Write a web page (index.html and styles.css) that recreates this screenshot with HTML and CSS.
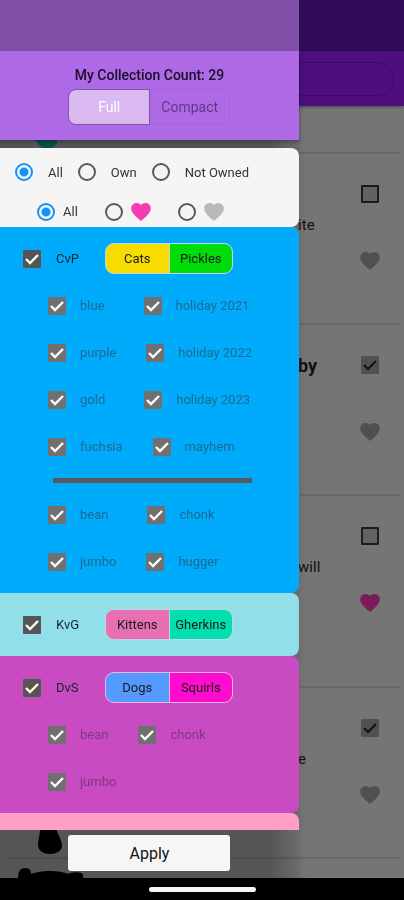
FILE: index.html
```html
<!DOCTYPE html>
<html lang="en">

<head>
    <meta charset="UTF-8">
    <meta name="viewport" content="width=device-width, initial-scale=1.0">
    <title>My Collection</title>
    <link rel="stylesheet" href="styles.css">
</head>

<body>
    <!-- Shared heart icon -->
    <svg class="sprite" aria-hidden="true">
        <symbol id="heart" viewBox="2 3 20 18.35">
            <path d="M12 21.35l-1.45-1.32C5.4 15.36 2 12.28 2 8.5 2 5.42 4.42 3 7.5 3c1.74 0 3.41.81 4.5 2.09C13.09 3.81 14.76 3 16.5 3 19.58 3 22 5.42 22 8.5c0 3.78-3.4 6.86-8.55 11.54L12 21.35z" />
        </symbol>
    </svg>

    <!-- Collection list behind the drawer -->
    <div class="page">
        <header>
            <div class="status-bar"></div>
            <div class="toolbar">
                <input type="search" class="search" aria-label="Search">
            </div>
        </header>

        <main class="list">
            <article class="item item-first">
                <svg class="thumb thumb-teal" viewBox="0 0 80 14" aria-hidden="true">
                    <path d="M25 0h24v6l-5 4H34z" />
                </svg>
            </article>

            <article class="item">
                <div class="item-text">
                    <h2></h2>
                    <p>ite</p>
                </div>
                <div class="item-actions">
                    <input type="checkbox" class="check dim" aria-label="Owned">
                    <button type="button" class="heart" aria-label="Favorite"><svg><use href="#heart" /></svg></button>
                </div>
            </article>

            <article class="item">
                <div class="item-text">
                    <h2>by</h2>
                    <p></p>
                </div>
                <div class="item-actions">
                    <input type="checkbox" class="check dim" aria-label="Owned" checked>
                    <button type="button" class="heart" aria-label="Favorite"><svg><use href="#heart" /></svg></button>
                </div>
            </article>

            <article class="item item-tall">
                <div class="item-text">
                    <h2></h2>
                    <p>will</p>
                </div>
                <div class="item-actions">
                    <input type="checkbox" class="check dim" aria-label="Owned">
                    <button type="button" class="heart loved" aria-label="Favorite"><svg><use href="#heart" /></svg></button>
                </div>
            </article>

            <article class="item">
                <svg class="thumb" viewBox="0 0 80 60" aria-hidden="true">
                    <path d="M32 24h15c0 11 7 17 7 25 0 5-6 8-12 8s-12-3-12-9c0-7 3-10 2-24z" />
                </svg>
                <div class="item-text">
                    <h2></h2>
                    <p>e</p>
                </div>
                <div class="item-actions">
                    <input type="checkbox" class="check dim" aria-label="Owned" checked>
                    <button type="button" class="heart" aria-label="Favorite"><svg><use href="#heart" /></svg></button>
                </div>
            </article>

            <article class="item item-last">
                <svg class="thumb thumb-top" viewBox="0 0 80 60" aria-hidden="true">
                    <path d="M10 60V19c0-7 3-10 7-10 5 0 6 3 6 6 6-2 11-3 19-3s14 1 18 3c2-2 15-3 15 1v44z" />
                </svg>
            </article>
        </main>

        <footer class="nav-bar">
            <span class="nav-handle"></span>
        </footer>
    </div>

    <!-- Filter drawer -->
    <aside class="drawer">
        <div class="drawer-status"></div>

        <div class="drawer-head">
            <h1>My Collection Count: 29</h1>
            <div class="view-toggle">
                <button type="button" class="active">Full</button>
                <button type="button">Compact</button>
            </div>
        </div>

        <form class="filters">
            <div class="panels">
                <section class="filter-card">
                    <div class="owned-row">
                        <label><input type="radio" class="radio" name="owned" checked>All</label>
                        <label><input type="radio" class="radio" name="owned">Own</label>
                        <label><input type="radio" class="radio" name="owned">Not Owned</label>
                    </div>
                    <div class="loved-row">
                        <label><input type="radio" class="radio" name="loved" checked>All</label>
                        <label><input type="radio" class="radio" name="loved" aria-label="Loved"><svg class="heart-pink"><use href="#heart" /></svg></label>
                        <label><input type="radio" class="radio" name="loved" aria-label="Not loved"><svg class="heart-grey"><use href="#heart" /></svg></label>
                    </div>
                </section>

                <section class="panel panel-cvp">
                    <div class="panel-head">
                        <label><input type="checkbox" class="check" checked>CvP</label>
                        <div class="team-toggle">
                            <button type="button" class="cats">Cats</button>
                            <button type="button" class="pickles">Pickles</button>
                        </div>
                    </div>
                    <div class="row">
                        <label class="wide"><input type="checkbox" class="check" checked>blue</label>
                        <label><input type="checkbox" class="check" checked>holiday 2021</label>
                    </div>
                    <div class="row">
                        <label><input type="checkbox" class="check" checked>purple</label>
                        <label><input type="checkbox" class="check" checked>holiday 2022</label>
                    </div>
                    <div class="row">
                        <label class="wide"><input type="checkbox" class="check" checked>gold</label>
                        <label><input type="checkbox" class="check" checked>holiday 2023</label>
                    </div>
                    <div class="row">
                        <label><input type="checkbox" class="check" checked>fuchsia</label>
                        <label><input type="checkbox" class="check" checked>mayhem</label>
                    </div>
                    <hr>
                    <div class="row">
                        <label class="wide"><input type="checkbox" class="check" checked>bean</label>
                        <label><input type="checkbox" class="check" checked>chonk</label>
                    </div>
                    <div class="row">
                        <label><input type="checkbox" class="check" checked>jumbo</label>
                        <label><input type="checkbox" class="check" checked>hugger</label>
                    </div>
                </section>

                <section class="panel panel-kvg">
                    <div class="panel-head">
                        <label><input type="checkbox" class="check" checked>KvG</label>
                        <div class="team-toggle">
                            <button type="button" class="kittens">Kittens</button>
                            <button type="button" class="gherkins">Gherkins</button>
                        </div>
                    </div>
                </section>

                <section class="panel panel-dvs">
                    <div class="panel-head">
                        <label><input type="checkbox" class="check" checked>DvS</label>
                        <div class="team-toggle">
                            <button type="button" class="dogs">Dogs</button>
                            <button type="button" class="squirls">Squirls</button>
                        </div>
                    </div>
                    <div class="row">
                        <label><input type="checkbox" class="check" checked>bean</label>
                        <label><input type="checkbox" class="check" checked>chonk</label>
                    </div>
                    <div class="row">
                        <label><input type="checkbox" class="check" checked>jumbo</label>
                    </div>
                </section>

                <section class="panel panel-pink"></section>
            </div>

            <div class="apply-bar">
                <button type="submit" class="apply">Apply</button>
            </div>
        </form>
    </aside>
</body>

</html>
```
FILE: styles.css
```css
/* Base */
* {
    box-sizing: border-box;
}

body {
    margin: 0;
    font-family: Roboto, sans-serif;
    font-size: 13px;
    color: #333;
    background: #000;
}

h1, h2, p {
    margin: 0;
}

button {
    padding: 0;
    font-family: inherit;
    font-size: 13px;
    cursor: pointer;
}

.sprite {
    display: none;
}

/* Page behind the drawer */
.page {
    height: 100vh;
    display: flex;
    flex-direction: column;
    background: #757575;
}

.status-bar {
    height: 51px;
    background: #330c59;
}

.toolbar {
    height: 55px;
    padding: 11px 10px;
    background: #4c0f7d;
    box-shadow: 0 1px 3px rgba(0, 0, 0, 0.4);
}

.search {
    display: block;
    width: 100%;
    height: 34px;
    border: 1px solid #3b0a63;
    border-radius: 17px;
    background: transparent;
}

.list {
    flex: 1;
    min-height: 0;
    overflow: hidden;
    padding: 0 4px 0 8px;
}

.item {
    display: grid;
    grid-template-columns: 74% 1fr 60px;
    height: 171px;
    border-bottom: 2px solid #686868;
}

.item-first {
    height: 48px;
}

.item-tall {
    height: 192px;
}

.item-last {
    border-bottom: none;
}

.thumb {
    grid-column: 1;
    grid-row: 1;
    width: 80px;
    height: 60px;
    align-self: end;
    fill: #000;
}

.thumb-teal {
    height: 14px;
    fill: #0a6b66;
}

.thumb-top {
    align-self: start;
}

.item-text {
    grid-column: 2;
    grid-row: 1;
    padding-top: 29px;
    color: #111;
}

.item-text h2 {
    height: 24px;
    font-size: 18px;
    line-height: 24px;
    font-weight: 700;
}

.item-text p {
    margin-top: 8px;
    font-size: 15px;
    line-height: 20px;
}

.item-actions {
    grid-column: 3;
    grid-row: 1;
    display: flex;
    flex-direction: column;
    align-items: center;
    gap: 49px;
    padding-top: 31px;
}

.heart {
    border: none;
    background: none;
    fill: #505050;
}

.heart svg {
    display: block;
    width: 20px;
    height: 18px;
}

.heart.loved {
    fill: #7c1b5a;
}

.nav-bar {
    height: 22px;
    display: flex;
    align-items: center;
    justify-content: center;
    background: #000;
}

.nav-handle {
    width: 107px;
    height: 5px;
    border-radius: 3px;
    background: #f5f5f5;
}

/* Checkboxes and radios */
.check {
    appearance: none;
    flex: none;
    width: 18px;
    height: 18px;
    margin: 0;
    border: 2px solid #555;
    border-radius: 1px;
}

.check:checked {
    border: none;
    background: #555 url("data:image/svg+xml,%3Csvg xmlns='http://www.w3.org/2000/svg' viewBox='0 0 18 18'%3E%3Cpath d='M3 9l4 4 8-8' fill='none' stroke='white' stroke-width='2.4'/%3E%3C/svg%3E");
}

.row .check:checked {
    background-color: #707070;
}

.check.dim {
    border-color: #1c1c1c;
    background-color: #626262;
}

.check.dim:checked {
    background: #515151 url("data:image/svg+xml,%3Csvg xmlns='http://www.w3.org/2000/svg' viewBox='0 0 18 18'%3E%3Cpath d='M3 9l4 4 8-8' fill='none' stroke='%23111' stroke-width='2'/%3E%3C/svg%3E");
}

.radio {
    appearance: none;
    flex: none;
    width: 18px;
    height: 18px;
    margin: 0;
    border: 2px solid #5a5a5a;
    border-radius: 50%;
}

.radio:checked {
    border-color: #1492f5;
    background: radial-gradient(circle, #1492f5 4px, transparent 5px);
}

/* Drawer */
.drawer {
    position: fixed;
    top: 0;
    bottom: 22px;
    left: 0;
    width: 74%;
    display: flex;
    flex-direction: column;
    background: linear-gradient(to right, rgba(0, 0, 0, 0.27) 90%, rgba(0, 0, 0, 0.08));
    box-shadow: 0 0 8px rgba(0, 0, 0, 0.12);
    clip-path: inset(0 -20px 0 0);
}

.drawer-status {
    height: 51px;
    background: #8050a9;
}

.drawer-head {
    height: 89px;
    padding-top: 16px;
    display: flex;
    flex-direction: column;
    align-items: center;
    gap: 6px;
    background: #ad69e6;
    box-shadow: 0 2px 4px rgba(0, 0, 0, 0.3);
}

.drawer-head h1 {
    font-size: 14px;
    line-height: 16px;
    font-weight: 500;
    color: #1a0f24;
}

.view-toggle {
    display: flex;
    width: 162px;
    height: 36px;
    border: 1px solid #a463dc;
    border-radius: 8px;
}

.view-toggle button {
    flex: 1;
    border: none;
    background: none;
    font-size: 14px;
    color: #623a86;
}

.view-toggle .active {
    margin: -1px 0 -1px -1px;
    border: 1px solid #80569f;
    border-radius: 8px 0 0 8px;
    background: #dab9f2;
    color: #fff;
}

.filters {
    flex: 1;
    min-height: 0;
    padding-top: 8px;
    display: flex;
    flex-direction: column;
}

.panels {
    flex: 1;
    min-height: 0;
    overflow: hidden;
}

.filter-card {
    background: #f5f5f5;
    border-radius: 0 8px 8px 0;
}

.filter-card label,
.panel label {
    display: flex;
    align-items: center;
}

.owned-row {
    display: flex;
    gap: 15px;
    height: 48px;
    padding-left: 15px;
}

.owned-row label {
    gap: 15px;
}

.loved-row {
    display: flex;
    gap: 27px;
    height: 31px;
    padding-left: 37px;
}

.loved-row label {
    gap: 8px;
}

.loved-row svg {
    width: 20px;
    height: 18px;
}

.heart-pink {
    fill: #f53cb5;
}

.heart-grey {
    fill: #b9b9b9;
}

/* Series panels */
.panel {
    padding: 8px 0;
    border-radius: 0 8px 8px 0;
}

.panel-cvp {
    background: #00abfb;
}

.panel-kvg {
    background: #90dfe9;
}

.panel-dvs {
    background: #c84bc1;
}

.panel-pink {
    height: 63px;
    background: #ff9fc6;
}

.panel-head {
    display: flex;
    align-items: center;
    gap: 25px;
    height: 47px;
    padding-left: 23px;
}

.panel-head label {
    gap: 15px;
    width: 57px;
    color: #152630;
}

.row {
    display: flex;
    gap: 30px;
    height: 47px;
    padding-left: 48px;
}

.row label {
    gap: 14px;
    color: #1c6a92;
}

.row .wide {
    margin-right: 9px;
}

.panel-dvs .row label {
    color: #7c3a80;
}

.panel hr {
    height: 5px;
    margin: 8px 47px 8px 53px;
    border: none;
    background: #5a5a5a;
}

.team-toggle {
    display: flex;
    gap: 1px;
    width: 128px;
    height: 31px;
    border: 1px solid #c5d3e8;
    border-radius: 9px;
    background: #c5d3e8;
    overflow: hidden;
}

.team-toggle button {
    flex: 1 1 0;
    border: none;
    color: #1a1a1a;
}

.panel-dvs .team-toggle {
    border-color: #eab4e8;
    background: #eab4e8;
}

.team-toggle .cats {
    background: #f8dc00;
}

.team-toggle .pickles {
    background: #00dc0a;
}

.team-toggle .kittens {
    background: #e670b2;
}

.team-toggle .gherkins {
    background: #00dfb0;
}

.team-toggle .dogs {
    background: #5599ff;
}

.team-toggle .squirls {
    background: #ff0ccf;
}

/* Apply button */
.apply-bar {
    display: flex;
    justify-content: center;
    padding: 5px 0 7px;
}

.apply {
    width: 162px;
    height: 36px;
    border: none;
    border-radius: 3px;
    background: #f6f6f6;
    font-size: 16px;
    color: #111;
}
```
